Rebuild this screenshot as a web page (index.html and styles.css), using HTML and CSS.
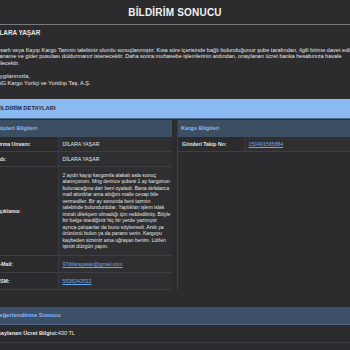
FILE: index.html
```html
<!DOCTYPE html>
<html>
<head>
  <meta charset="utf-8">
  <title>Bildirim Sonucu</title>
  <link rel="stylesheet" href="styles.css">
</head>
<body>
  <div class="page">
    <div class="header">
      <h1>BİLDİRİM SONUCU</h1>
    </div>

    <div class="letter">
      <p class="name"><b>DİLARA YAŞAR</b></p>
      <p>Hasarlı veya Kayıp Kargo Tazmin talebiniz olumlu sonuçlanmıştır. Kısa süre içerisinde bağlı bulunduğunuz şube tarafından, ilgili birime davet edilip ibraname ve gider pusulası doldurmanız istenecektir. Daha sonra muhasebe işlemlerinin ardından, onaylanan ücret banka hesabınıza havale edilecektir.</p>
      <p>Saygılarımızla,<br>MNG Kargo Yurtiçi ve Yurtdışı Taş. A.Ş.</p>
    </div>

    <div class="details-bar">BİLDİRİM DETAYLARI</div>

    <div class="columns">
      <table class="info">
        <colgroup><col class="label-col"><col></colgroup>
        <tr><th colspan="2">Müşteri Bilgileri</th></tr>
        <tr><td class="label">Firma Unvanı:</td><td>DİLARA YAŞAR</td></tr>
        <tr><td class="label">Adı:</td><td>DİLARA YAŞAR</td></tr>
        <tr>
          <td class="label">Açıklama:</td>
          <td class="desc">2 aydır kayıp kargomla alakalı asla sonuç alamıyorum. Mng derince şubesi 1 ay kargonun bulunacağına dair beni oyaladı. Bana defalarca mail attırdılar ama attığım maile cevap bile vermediler. Bir ay sonunda beni tazmin talebinde bulundurdular. Yaptıkları işlem islak imzalı dilekçem olmadığı için reddedilmiş. Böyle bir belge istediğiniz hiç bir yerde yazmıyor ayrıca çalışanlar da bunu söylemedi. Artık ya ürünümü bulun ya da paramı verin. Kargoyu kaybeden sizsiniz ama uğraşan benim. Lütfen işinizi düzgün yapın.</td>
        </tr>
        <tr class="tall"><td class="label">E-Mail:</td><td><a href="#">97dilarayasar@gmail.com</a></td></tr>
        <tr class="tall"><td class="label">GSM:</td><td><a href="#">5536343532</a></td></tr>
      </table>

      <div class="side">
        <table class="info">
          <colgroup><col class="label-col"><col></colgroup>
          <tr><th colspan="2">Kargo Bilgileri</th></tr>
          <tr><td class="label">Gönderi Takip No:</td><td><a href="#">150491565884</a></td></tr>
        </table>
      </div>
    </div>

    <div class="section-head">Değerlendirme Sonucu</div>
    <div class="result-row"><b>Onaylanan Ücret Bilgisi:</b>430 TL</div>
    <div class="result-row short"></div>
  </div>
</body>
</html>
```

FILE: styles.css
```css
body {
  margin: 0;
  background-color: #2c2c2e;
  color: #e6e6e6;
  font-family: "Liberation Sans", Arial, sans-serif;
  font-size: 5.6px;
  overflow: hidden;
}

.page {
  width: 366px;
  margin-left: -8px;
}

.header {
  height: 24px;
  border-bottom: 1px solid #7a7a7c;
  display: flex;
  align-items: center;
  justify-content: center;
}

.header h1 {
  margin: 0;
  font-size: 10px;
  color: #f2f2f2;
  letter-spacing: 0.2px;
}

.letter {
  padding: 5px 1px 6px;
  line-height: 6.6px;
}

.letter p {
  margin: 0 0 6.6px;
}

.letter .name {
  font-size: 6.4px;
  margin-bottom: 10px;
}

.details-bar {
  background-color: #8bbaf2;
  color: #1f2a36;
  font-weight: bold;
  font-size: 5.8px;
  height: 19px;
  line-height: 19px;
  padding-left: 4px;
  border-bottom: 1px solid #4b6a8c;
}

.columns {
  display: flex;
  gap: 5px;
  margin-top: 1px;
}

.columns > .info {
  width: 180px;
  flex-shrink: 0;
}

.side {
  width: 180px;
  flex-shrink: 0;
  border-left: 1px solid #3e3e42;
}

.side .info {
  width: 100%;
}

.info {
  border-collapse: collapse;
  table-layout: fixed;
  font-size: 5.2px;
}

.label-col {
  width: 66px;
}

.info th {
  background-color: #3c4e62;
  color: #8db7ee;
  text-align: left;
  font-size: 5.6px;
  height: 17px;
  padding: 0 3px;
}

.info td {
  border-bottom: 1px solid #3f3f43;
  padding: 0 4px;
  height: 14px;
  vertical-align: middle;
  background-color: #2f2f32;
}

.info tr.tall td {
  height: 16px;
}

.info td.label {
  font-weight: bold;
  background-color: #2b2b2e;
  border-right: 1px solid #3a3a3e;
}

.info td.desc {
  font-size: 5.1px;
  line-height: 6.5px;
  padding: 5px 0 5px 4px;
}

.info a {
  color: #6ea8ec;
}

.section-head {
  margin-top: 17px;
  background-color: #3c5068;
  color: #8db7ee;
  font-weight: bold;
  font-size: 6px;
  height: 17px;
  line-height: 17px;
  padding-left: 3px;
  border-bottom: 1px solid #4c6480;
}

.result-row {
  height: 17px;
  line-height: 17px;
  padding-left: 1px;
  border-bottom: 1px solid #3f3f43;
}

.result-row.short {
  height: 8px;
}
```
